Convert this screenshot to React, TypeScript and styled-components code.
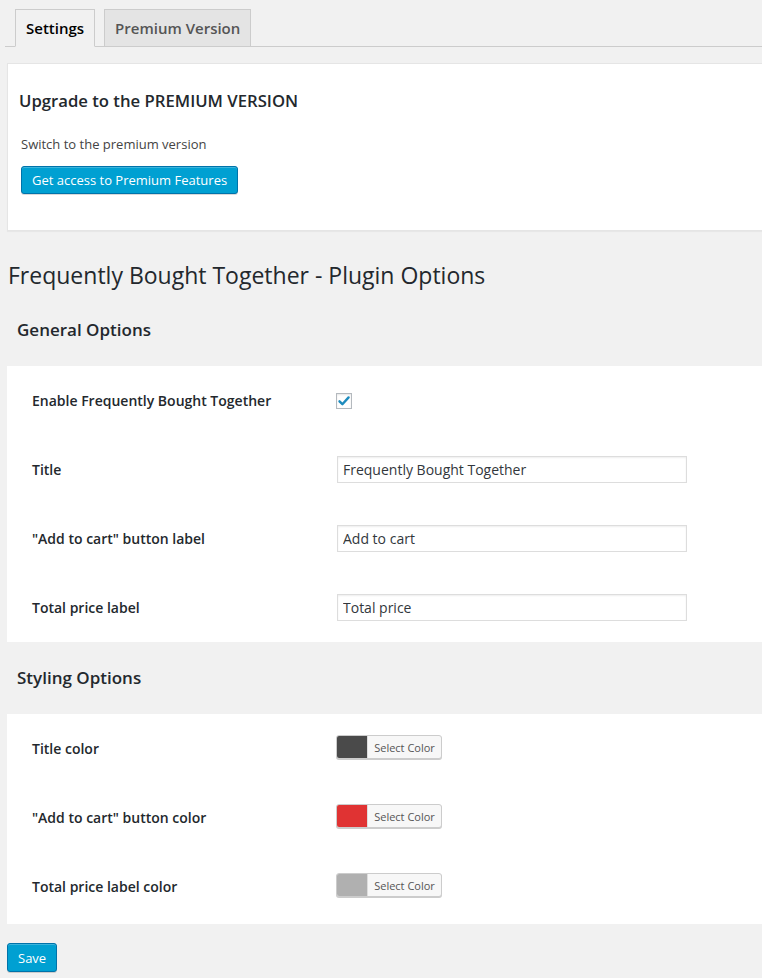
import React from "react";
import styled, { createGlobalStyle } from "styled-components";

const Global = createGlobalStyle`
  html, body { margin: 0; padding: 0; background: #f1f1f1; }
  body {
    font-family: "Open Sans", "Noto Sans", sans-serif;
    font-size: 13px;
    color: #444;
    overflow-x: hidden;
  }
  * { box-sizing: border-box; }
`;

const Page = styled.div`
  padding: 0 0 6px 7px;
  width: 100%;
`;

const TabBar = styled.div`
  display: flex;
  margin-left: -2px;
  padding: 9px 0 0 10px;
  border-bottom: 1px solid #ccc;
  gap: 9px;
`;

const Tab = styled.div<{ $active?: boolean }>`
  height: 38px;
  margin-bottom: -1px;
  padding: 0 10px;
  display: flex;
  align-items: center;
  font-size: 15px;
  font-weight: 600;
  border: 1px solid #ccc;
  border-bottom: 1px solid ${(p) => (p.$active ? "#f1f1f1" : "#ccc")};
  background: ${(p) => (p.$active ? "#f1f1f1" : "#e4e4e4")};
  color: ${(p) => (p.$active ? "#000" : "#555")};
`;

const Card = styled.div`
  margin-top: 16px;
  margin-right: -20px;
  background: #fff;
  border: 1px solid #e5e5e5;
  box-shadow: 0 1px 1px rgba(0, 0, 0, 0.04);
  padding: 25px 12px 36px;
`;

const CardTitle = styled.h3`
  margin: 0 0 0 -1px;
  font-size: 16.7px;
  font-weight: 600;
  color: #23282d;
  line-height: 24px;
`;

const CardText = styled.p`
  margin: 21px 0 0 1px;
  line-height: 20px;
  font-size: 13px;
  color: #444;
`;

const PrimaryButton = styled.button`
  font-family: inherit;
  font-size: 13px;
  height: 28px;
  line-height: 26px;
  padding: 0 10px;
  background: #00a0d2;
  border: 1px solid #0073aa;
  border-radius: 3px;
  color: #fff;
  box-shadow: inset 0 1px 0 rgba(120, 200, 230, 0.5), 0 1px 0 rgba(0, 0, 0, 0.15);
  cursor: pointer;
`;

const CardButton = styled(PrimaryButton)`
  margin: 12px 0 0 1px;
`;

const PageTitle = styled.h1`
  margin: 28px 0 0 1px;
  font-size: 23px;
  font-weight: 400;
  line-height: 32px;
  color: #23282d;
`;

const SectionTitle = styled.h3<{ $gap: number }>`
  margin: ${(p) => p.$gap}px 0 0 10px;
  font-size: 17px;
  font-weight: 600;
  line-height: 24px;
  color: #23282d;
`;

const Panel = styled.div<{ $tail?: number }>`
  margin-top: 24px;
  margin-right: -20px;
  background: #fff;
  padding: 0 0 ${(p) => p.$tail ?? 0}px 25px;
`;

const Row = styled.div`
  display: grid;
  grid-template-columns: 305px 1fr;
  align-items: center;
  height: 69px;
`;

const Label = styled.div`
  font-size: 14px;
  font-weight: 600;
  color: #23282d;
`;

const TextInput = styled.input`
  width: 350px;
  height: 27px;
  padding: 0 5px;
  font-family: inherit;
  font-size: 14px;
  color: #32373c;
  border: 1px solid #ddd;
  background: #fff;
  box-shadow: inset 0 1px 2px rgba(0, 0, 0, 0.07);
  outline: none;
`;

const CheckBox = styled.span`
  margin-left: -1px;
  width: 16px;
  height: 16px;
  border: 1px solid #b4b9be;
  background: #fff;
  box-shadow: inset 0 1px 2px rgba(0, 0, 0, 0.1);
  display: flex;
  align-items: center;
  justify-content: center;
`;

const ColorButton = styled.div`
  margin-left: -1px;
  display: inline-flex;
  align-items: stretch;
  width: 106px;
  height: 24px;
  border: 1px solid #ccc;
  border-radius: 3px;
  overflow: hidden;
  background: #f7f7f7;
  box-shadow: 0 1px 0 #ccc;
`;

const Swatch = styled.span<{ $color: string }>`
  width: 30px;
  background: ${(p) => p.$color};
`;

const SwatchText = styled.span`
  flex: 1;
  display: flex;
  align-items: center;
  justify-content: center;
  font-size: 11px;
  color: #555;
  border-left: 1px solid #ddd;
`;

const SaveButton = styled(PrimaryButton)`
  margin-top: 19px;
  height: 29px;
`;

const Check = () => (
  <svg width="14" height="14" viewBox="0 0 14 14">
    <path d="M2.5 7.3 L5.4 10.2 L11.6 3.4" fill="none" stroke="#1e8cbe" strokeWidth="2.4" strokeLinecap="round" strokeLinejoin="round" />
  </svg>
);

const generalRows = [
  { label: "Title", value: "Frequently Bought Together" },
  { label: '"Add to cart" button label', value: "Add to cart" },
  { label: "Total price label", value: "Total price" },
];

const colorRows = [
  { label: "Title color", color: "#4a4a4a" },
  { label: '"Add to cart" button color', color: "#e03333" },
  { label: "Total price label color", color: "#b0b0b0" },
];

export default function App() {
  return (
    <>
      <Global />
      <Page>
        <TabBar>
          <Tab $active>Settings</Tab>
          <Tab>Premium Version</Tab>
        </TabBar>
        <Card>
          <CardTitle>Upgrade to the PREMIUM VERSION</CardTitle>
          <CardText>Switch to the premium version</CardText>
          <CardButton>Get access to Premium Features</CardButton>
        </Card>
        <PageTitle>Frequently Bought Together - Plugin Options</PageTitle>
        <SectionTitle $gap={27}>General Options</SectionTitle>
        <Panel>
          <Row>
            <Label>Enable Frequently Bought Together</Label>
            <CheckBox>
              <Check />
            </CheckBox>
          </Row>
          {generalRows.map((r) => (
            <Row key={r.label}>
              <Label>{r.label}</Label>
              <TextInput defaultValue={r.value} />
            </Row>
          ))}
        </Panel>
        <SectionTitle $gap={24}>Styling Options</SectionTitle>
        <Panel $tail={3}>
          {colorRows.map((r) => (
            <Row key={r.label}>
              <Label>{r.label}</Label>
              <div>
                <ColorButton>
                  <Swatch $color={r.color} />
                  <SwatchText>Select Color</SwatchText>
                </ColorButton>
              </div>
            </Row>
          ))}
        </Panel>
        <SaveButton>Save</SaveButton>
      </Page>
    </>
  );
}
